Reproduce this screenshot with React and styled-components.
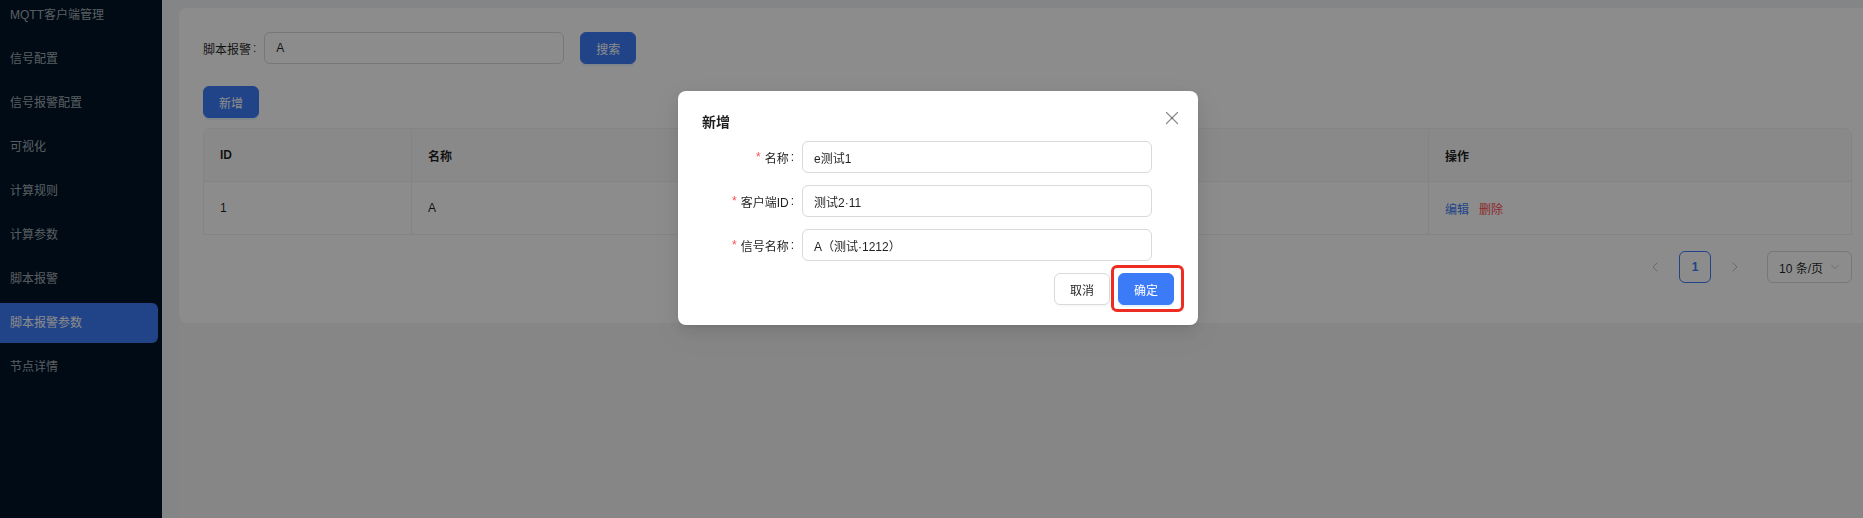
import React from "react";
import styled, { createGlobalStyle } from "styled-components";
import { ChevronLeft, ChevronRight, ChevronDown, X } from "lucide-react";

const primary = "#3c7bf7";
const textColor = "rgba(0, 0, 0, 0.88)";
const border = "#d9d9d9";
const split = "#f0f0f0";

const GlobalStyle = createGlobalStyle`
  html, body {
    margin: 0;
    padding: 0;
    overflow: hidden;
  }
  body {
    font-family: "Liberation Sans", "Noto Sans CJK SC", sans-serif;
    font-size: 12px;
    color: ${textColor};
  }
  * {
    box-sizing: border-box;
  }
`;

const Layout = styled.div`
  display: flex;
  width: 100vw;
  height: 100vh;
  overflow: hidden;
`;

const Sider = styled.aside`
  width: 162px;
  flex-shrink: 0;
  background: #001529;
  overflow: hidden;
`;

const Menu = styled.ul`
  list-style: none;
  margin: -5px 0 0;
  padding: 0;
`;

const MenuItem = styled.li`
  height: 40px;
  line-height: 40px;
  margin: 0 4px 4px 0;
  padding-left: 10px;
  border-radius: 0 6px 6px 0;
  font-size: 12px;
  white-space: nowrap;
  color: ${(p) => (p.$active ? "#fff" : "rgba(255, 255, 255, 0.65)")};
  background: ${(p) => (p.$active ? primary : "transparent")};
`;

const Main = styled.main`
  flex: 1;
  min-width: 0;
  display: flex;
  flex-direction: column;
  background: #f0f2f5;
  padding: 8px 0 0 17px;
`;

const Content = styled.div`
  flex: 1;
  background: #f5f5f5;
`;

const Card = styled.section`
  background: #fff;
  border-radius: 8px 0 0 8px;
  padding: 24px 11px 24px 24px;
`;

const SearchRow = styled.div`
  display: flex;
  align-items: center;
  height: 32px;
`;

const Label = styled.label`
  display: flex;
  align-items: center;
  white-space: nowrap;
  &::after {
    content: ":";
    margin: 0 8px 0 2px;
  }
`;

const Input = styled.div`
  width: ${(p) => p.$width || "100%"};
  height: 32px;
  display: flex;
  align-items: center;
  padding: 0 11px;
  border: 1px solid ${border};
  border-radius: 6px;
  background: #fff;
  font-size: 12px;
  white-space: nowrap;
`;

const Button = styled.button`
  height: 32px;
  padding: 0 15px;
  border-radius: 6px;
  font-family: inherit;
  font-size: 12px;
  border: 1px solid ${(p) => (p.$primary ? primary : border)};
  background: ${(p) => (p.$primary ? primary : "#fff")};
  color: ${(p) => (p.$primary ? "#fff" : textColor)};
  box-shadow: ${(p) =>
    p.$primary ? "0 2px 0 rgba(5, 145, 255, 0.1)" : "0 2px 0 rgba(0, 0, 0, 0.02)"};
  cursor: pointer;
`;

const SearchButton = styled(Button)`
  margin-left: 16px;
`;

const AddButton = styled(Button)`
  display: block;
  margin: 22px 0 10px;
`;

const Table = styled.div`
  display: grid;
  grid-template-columns: 208px 1017px 1fr;
  border: 1px solid ${split};
  border-radius: 8px 8px 0 0;
`;

const Cell = styled.div`
  display: flex;
  align-items: center;
  gap: 10px;
  padding: 0 16px;
  height: ${(p) => (p.$head ? "53px" : "52px")};
  border-right: 1px solid ${split};
  border-bottom: ${(p) => (p.$head ? `1px solid ${split}` : "none")};
  background: ${(p) => (p.$head ? "#fafafa" : "#fff")};
  font-weight: ${(p) => (p.$head ? 600 : 400)};
  white-space: nowrap;
  &:nth-child(3n) {
    border-right: none;
  }
  &:first-child {
    border-top-left-radius: 8px;
  }
  &:nth-child(3) {
    border-top-right-radius: 8px;
  }
`;

const Link = styled.a`
  color: ${(p) => (p.$danger ? "#ff4d4f" : primary)};
  cursor: pointer;
`;

const Pagination = styled.div`
  display: flex;
  justify-content: flex-end;
  align-items: center;
  gap: 8px;
  margin: 16px 0;
`;

const PageItem = styled.div`
  width: 32px;
  height: 32px;
  display: flex;
  align-items: center;
  justify-content: center;
  border-radius: 6px;
  border: 1px solid ${(p) => (p.$active ? primary : "transparent")};
  color: ${(p) => (p.$active ? primary : "rgba(0, 0, 0, 0.25)")};
  font-size: 12px;
  font-weight: ${(p) => (p.$active ? 600 : 400)};
`;

const SizeSelect = styled.div`
  width: 85px;
  height: 32px;
  margin-left: 8px;
  display: flex;
  align-items: center;
  justify-content: space-between;
  padding: 0 9px 0 11px;
  border: 1px solid ${border};
  border-radius: 6px;
  color: ${textColor};
  svg {
    color: rgba(0, 0, 0, 0.25);
  }
`;

const Mask = styled.div`
  position: fixed;
  inset: 0;
  background: rgba(0, 0, 0, 0.45);
  z-index: 1000;
`;

const Modal = styled.div`
  position: fixed;
  top: 91px;
  left: 678px;
  width: 520px;
  z-index: 1001;
  background: #fff;
  border-radius: 8px;
  padding: 20px 24px;
  box-shadow: 0 6px 16px 0 rgba(0, 0, 0, 0.08), 0 3px 6px -4px rgba(0, 0, 0, 0.12),
    0 9px 28px 8px rgba(0, 0, 0, 0.05);
`;

const ModalTitle = styled.div`
  width: max-content;
  font-size: 14px;
  font-weight: 600;
  line-height: 22px;
  margin-bottom: 8px;
`;

const Close = styled.span`
  position: absolute;
  top: 16px;
  right: 15px;
  width: 22px;
  height: 22px;
  display: flex;
  align-items: center;
  justify-content: center;
  color: rgba(0, 0, 0, 0.45);
`;

const Form = styled.div`
  display: grid;
  grid-template-columns: 100px 350px;
  row-gap: 12px;
  align-items: center;
`;

const FormLabel = styled.label`
  justify-self: end;
  display: flex;
  align-items: center;
  white-space: nowrap;
  &::before {
    content: "*";
    color: #ff4d4f;
    margin-right: 4px;
    font-family: SimSun, "Liberation Sans", sans-serif;
  }
  &::after {
    content: ":";
    margin: 0 8px 0 2px;
  }
`;

const Footer = styled.div`
  display: flex;
  justify-content: flex-end;
  gap: 8px;
  margin-top: 12px;
`;

const Highlight = styled.span`
  position: relative;
  display: inline-flex;
  &::after {
    content: "";
    position: absolute;
    top: -8px;
    left: -7px;
    right: -10px;
    bottom: -7px;
    border: 3px solid #ee2d22;
    border-radius: 6px;
    pointer-events: none;
  }
`;

const menu = [
  "MQTT客户端管理",
  "信号配置",
  "信号报警配置",
  "可视化",
  "计算规则",
  "计算参数",
  "脚本报警",
  "脚本报警参数",
  "节点详情",
];

const columns = ["ID", "名称", "操作"];

export default function App() {
  return (
    <>
      <GlobalStyle />
      <Layout>
        <Sider>
          <Menu>
            {menu.map((item) => (
              <MenuItem key={item} $active={item === "脚本报警参数"}>
                {item}
              </MenuItem>
            ))}
          </Menu>
        </Sider>
        <Main>
          <Content>
            <Card>
              <SearchRow>
                <Label>脚本报警</Label>
                <Input $width="300px">A</Input>
                <SearchButton $primary>搜索</SearchButton>
              </SearchRow>
              <AddButton $primary>新增</AddButton>
              <Table>
                {columns.map((c) => (
                  <Cell $head key={c}>
                    {c}
                  </Cell>
                ))}
                <Cell>1</Cell>
                <Cell>A</Cell>
                <Cell>
                  <Link>编辑</Link>
                  <Link $danger>删除</Link>
                </Cell>
              </Table>
              <Pagination>
                <PageItem>
                  <ChevronLeft size={16} strokeWidth={1.5} />
                </PageItem>
                <PageItem $active>1</PageItem>
                <PageItem>
                  <ChevronRight size={16} strokeWidth={1.5} />
                </PageItem>
                <SizeSelect>
                  <span>10 条/页</span>
                  <ChevronDown size={14} strokeWidth={1.5} />
                </SizeSelect>
              </Pagination>
            </Card>
          </Content>
        </Main>
      </Layout>
      <Mask />
      <Modal>
        <ModalTitle>新增</ModalTitle>
        <Close>
          <X size={24} strokeWidth={1.3} />
        </Close>
        <Form>
          <FormLabel>名称</FormLabel>
          <Input>e测试1</Input>
          <FormLabel>客户端ID</FormLabel>
          <Input>测试2·11</Input>
          <FormLabel>信号名称</FormLabel>
          <Input>A（测试·1212）</Input>
        </Form>
        <Footer>
          <Button>取消</Button>
          <Highlight>
            <Button $primary>确定</Button>
          </Highlight>
        </Footer>
      </Modal>
    </>
  );
}
